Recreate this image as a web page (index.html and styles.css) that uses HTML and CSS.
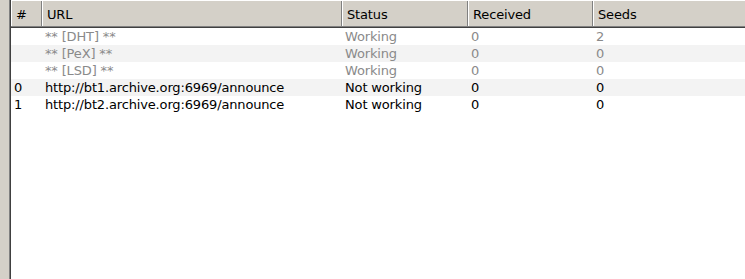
FILE: index.html
```html
<!DOCTYPE html>
<html>
<head>
<meta charset="utf-8">
<link rel="stylesheet" href="styles.css">
</head>
<body>
<div class="frame">
  <div class="strip"></div>
  <div class="view">
    <table class="grid">
      <colgroup>
        <col class="c-num">
        <col class="c-url">
        <col class="c-status">
        <col class="c-recv">
        <col class="c-seeds">
      </colgroup>
      <thead>
        <tr>
          <th>#</th>
          <th>URL</th>
          <th>Status</th>
          <th>Received</th>
          <th class="last">Seeds</th>
        </tr>
      </thead>
      <tbody>
        <tr class="dim"><td></td><td>** [DHT] **</td><td>Working</td><td>0</td><td>2</td></tr>
        <tr class="dim alt"><td></td><td>** [PeX] **</td><td>Working</td><td>0</td><td>0</td></tr>
        <tr class="dim"><td></td><td>** [LSD] **</td><td>Working</td><td>0</td><td>0</td></tr>
        <tr class="alt"><td>0</td><td>http://bt1.archive.org:6969/announce</td><td>Not working</td><td>0</td><td>0</td></tr>
        <tr><td>1</td><td>http://bt2.archive.org:6969/announce</td><td>Not working</td><td>0</td><td>0</td></tr>
      </tbody>
    </table>
  </div>
</div>
</body>
</html>
```

FILE: styles.css
```css
html, body {
  margin: 0;
  padding: 0;
  background: #ffffff;
}
.frame {
  display: flex;
  width: 745px;
  height: 279px;
  overflow: hidden;
}
.strip {
  width: 9px;
  flex: none;
  background: #d4d0c8;
}
.view {
  flex: 1;
  border-left: 1px solid #808080;
  box-shadow: inset 1px 0 0 #404040;
  padding-left: 1px;
  background: #ffffff;
}
.grid {
  border-collapse: collapse;
  table-layout: fixed;
  width: 734px;
  font-family: "DejaVu Sans", sans-serif;
  font-size: 13px;
  letter-spacing: -0.15px;
}
.c-num { width: 31px; }
.c-url { width: 300px; }
.c-status { width: 126px; }
.c-recv { width: 125px; }
.c-seeds { width: 152px; }
th {
  height: 26px;
  padding: 0 0 0 5px;
  text-align: left;
  font-weight: normal;
  color: #000;
  background: #d4d0c8;
  border-top: 1px solid #ffffff;
  border-bottom: 1px solid #404040;
  box-shadow: inset 0 -1px 0 #808080, inset 1px 0 0 #ffffff, inset -1px 0 0 #808080;
}
th.last {
  box-shadow: inset 0 -1px 0 #808080, inset 1px 0 0 #ffffff;
}
td {
  height: 17px;
  padding: 0 0 0 3px;
  white-space: nowrap;
  color: #000;
  line-height: 17px;
}
tr.alt td { background: #f3f3f3; }
tr.dim td { color: #8a8a8a; }
```
